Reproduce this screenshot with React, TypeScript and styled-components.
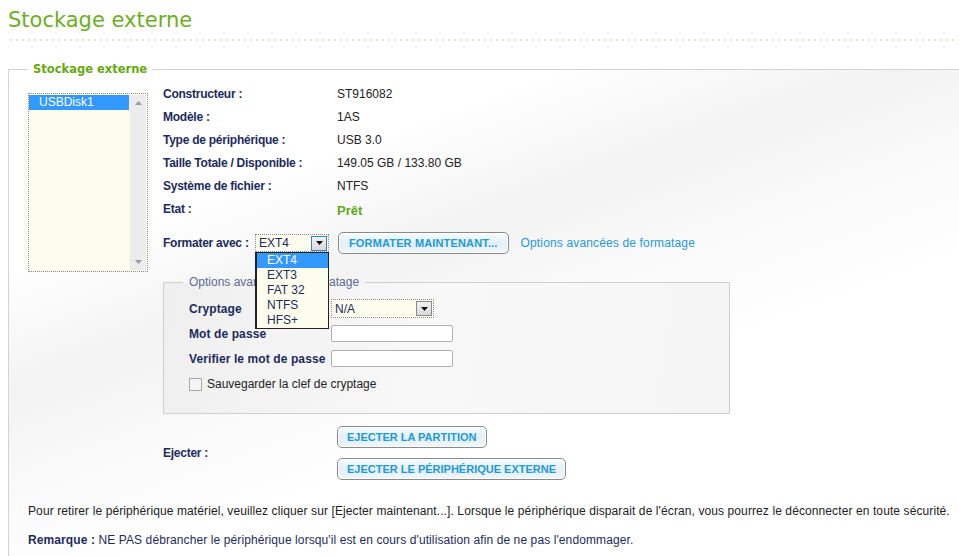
import React from "react";
import styled, { createGlobalStyle } from "styled-components";

const GlobalStyle = createGlobalStyle`
  html, body {
    margin: 0;
    padding: 0;
    background: #fff;
  }
  body {
    overflow: hidden;
    font-family: "Liberation Sans", Arial, sans-serif;
    font-size: 12px;
    color: #222;
  }
  #root {
    width: 959px;
    height: 556px;
    overflow: hidden;
  }
`;

const Page = styled.div`
  padding-left: 8px;
`;

const Title = styled.h1`
  margin: 0;
  padding-top: 6px;
  font-family: "DejaVu Sans", Verdana, sans-serif;
  font-size: 21px;
  font-weight: normal;
  line-height: 28px;
  color: #6caf1f;
`;

const Dots = styled.div`
  margin: 5px 0 0 2px;
  height: 2px;
  background: repeating-linear-gradient(to right, #dfe3cb 0 2px, transparent 2px 6px);
`;

const Panel = styled.fieldset`
  margin: 21px -40px 0 0;
  padding: 6px 0 60px 19px;
  min-width: 0;
  border: 1px solid #d3d3d3;
  background: linear-gradient(160deg, #fff 0%, #fff 22%, #f3f3f3 36%, #fafafa 48%, #fff 60%);
`;

const PanelLegend = styled.legend`
  padding: 0 5px;
  font-family: "DejaVu Sans", Verdana, sans-serif;
  font-weight: bold;
  font-size: 11.5px;
  line-height: 14px;
  color: #66a812;
`;

const Top = styled.div`
  display: flex;
  align-items: flex-start;
  gap: 15px;
`;

const ListBox = styled.div`
  margin-top: 11px;
  width: 120px;
  height: 179px;
  box-sizing: border-box;
  border: 1px dotted #8c8c8c;
  background: #fdfdee;
  display: flex;
  padding: 1px 1px 1px 0;
`;

const ListItems = styled.div`
  flex: 1;
`;

const ListItem = styled.div<{ $selected?: boolean }>`
  height: 15px;
  line-height: 15px;
  padding-left: 10px;
  font-size: 12px;
  color: ${(p) => (p.$selected ? "#fff" : "#1d2b5c")};
  background: ${(p) => (p.$selected ? "#3399ff" : "transparent")};
`;

const ScrollBar = styled.div`
  width: 16px;
  background: #ececec;
  border-left: 1px solid #f6f6f6;
  display: flex;
  flex-direction: column;
  justify-content: space-between;
  align-items: center;
  padding: 6px 0;
`;

const Details = styled.div`
  display: flex;
  flex-direction: column;
`;

const InfoGrid = styled.div`
  display: grid;
  grid-template-columns: 174px auto;
  grid-auto-rows: 23px;
  align-items: center;
`;

const Label = styled.span`
  font-weight: bold;
  color: #1c2b5c;
  letter-spacing: -0.25px;
`;

const Value = styled.span<{ $status?: boolean }>`
  color: ${(p) => (p.$status ? "#5fa818" : "#222")};
  font-weight: ${(p) => (p.$status ? "bold" : "normal")};
  font-size: ${(p) => (p.$status ? "13px" : "12px")};
  padding-top: ${(p) => (p.$status ? "3px" : "0")};
`;

const FormatRow = styled.div`
  margin-top: 12px;
  height: 22px;
  display: flex;
  align-items: center;
`;

const FormatLabel = styled(Label)`
  width: 92px;
`;

const SelectWrap = styled.div<{ $width: number; $height: number }>`
  position: relative;
  width: ${(p) => p.$width}px;
  height: ${(p) => p.$height}px;
  box-sizing: border-box;
  border: 1px dotted #8c8c8c;
  background: #fdfdee;
  display: flex;
  align-items: center;
  justify-content: space-between;
  padding: 0 1px 0 3px;
  color: #1d2b5c;
  font-size: 12px;
`;

const ArrowBtn = styled.div<{ $focus?: boolean }>`
  width: 16px;
  height: 15px;
  box-sizing: border-box;
  border: 1px solid ${(p) => (p.$focus ? "#3b80cf" : "#8a8a8a")};
  background: linear-gradient(#f2f2f2, #d9d9d9);
  display: flex;
  align-items: center;
  justify-content: center;
`;

const Popup = styled.div`
  position: absolute;
  top: 17px;
  left: -1px;
  width: 74px;
  height: 77px;
  box-sizing: border-box;
  border: 1px solid #222;
  border-left-width: 2px;
  background: #fdfdee;
  z-index: 5;
`;

const PopupItem = styled.div<{ $selected?: boolean }>`
  height: 15px;
  line-height: 15px;
  padding-left: 10px;
  color: ${(p) => (p.$selected ? "#fff" : "#1d2b5c")};
  background: ${(p) => (p.$selected ? "#3399ff" : "transparent")};
`;

const Button = styled.button`
  height: 22px;
  box-sizing: border-box;
  padding: 0 9px;
  border: 1px solid #8a8a8a;
  border-radius: 5px;
  background: linear-gradient(#f6fbfd 0%, #e3f0f7 50%, #eef6fa 100%);
  box-shadow: inset 0 0 0 1px #fff;
  font-family: "Liberation Sans", Arial, sans-serif;
  font-size: 11px;
  font-weight: bold;
  color: #1f9ad6;
  cursor: pointer;
`;

const FormatButton = styled(Button)`
  margin-left: 9px;
  padding: 0 10px;
  letter-spacing: 0.15px;
`;

const Link = styled.a`
  margin-left: 12px;
  color: #1f9ad8;
  text-decoration: none;
  font-size: 12px;
  letter-spacing: 0.15px;
`;

const Options = styled.fieldset`
  margin: 21px 0 0 0;
  width: 567px;
  box-sizing: border-box;
  padding: 7px 0 16px 19px;
  border: 1px solid #cfcfcf;
  background: linear-gradient(100deg, #efefef 0%, #f8f8f8 45%, #f5f5f5 100%);
`;

const OptionsLegend = styled.legend`
  padding: 0 6px;
  font-size: 12px;
  line-height: 14px;
  color: #5b6a96;
`;

const OptionRow = styled.div`
  height: 25px;
  padding-left: 6px;
  display: grid;
  grid-template-columns: 142px auto;
  align-items: center;
`;

const OptionLabel = styled.span`
  font-weight: bold;
  color: #1c2b5c;
  letter-spacing: 0.1px;
`;

const TextInput = styled.input`
  width: 122px;
  height: 17px;
  box-sizing: border-box;
  border: 1px solid #b0b0b0;
  border-radius: 2px;
  background: #fff;
  padding: 0 2px;
`;

const CheckRow = styled.label`
  height: 26px;
  padding-left: 6px;
  display: flex;
  align-items: center;
  gap: 5px;
  color: #222;
`;

const CheckBox = styled.span`
  width: 13px;
  height: 13px;
  box-sizing: border-box;
  border: 1px solid #a8a8a8;
  background: #f5f5f5;
`;

const EjectRow = styled.div`
  margin-top: 12px;
  display: grid;
  grid-template-columns: 174px auto;
  align-items: center;
`;

const EjectButtons = styled.div`
  display: flex;
  flex-direction: column;
  align-items: flex-start;
  gap: 10px;
`;

const Notes = styled.div`
  margin-top: 23px;
  display: flex;
  flex-direction: column;
  gap: 13px;
`;

const Note = styled.p<{ $remark?: boolean }>`
  margin: 0;
  line-height: 16px;
  letter-spacing: 0.1px;
  color: ${(p) => (p.$remark ? "#1d2b5c" : "#222")};
`;

const Strong = styled.b`
  color: #1c2b5c;
`;

const Tri = ({ up, color = "#111" }: { up?: boolean; color?: string }) => (
  <svg width="7" height="4" viewBox="0 0 7 4">
    <path d={up ? "M0 4 L3.5 0 L7 4 Z" : "M0 0 L7 0 L3.5 4 Z"} fill={color} />
  </svg>
);

const info: [string, string][] = [
  ["Constructeur :", "ST916082"],
  ["Modèle :", "1AS"],
  ["Type de périphérique :", "USB 3.0"],
  ["Taille Totale / Disponible :", "149.05 GB / 133.80 GB"],
  ["Système de fichier :", "NTFS"],
];

const formats = ["EXT4", "EXT3", "FAT 32", "NTFS", "HFS+"];

export default function App() {
  return (
    <>
      <GlobalStyle />
      <Page>
        <Title>Stockage externe</Title>
        <Dots />
        <Panel>
          <PanelLegend>Stockage externe</PanelLegend>
          <Top>
            <ListBox>
              <ListItems>
                <ListItem $selected>USBDisk1</ListItem>
              </ListItems>
              <ScrollBar>
                <Tri up color="#9a9a9a" />
                <Tri color="#9a9a9a" />
              </ScrollBar>
            </ListBox>
            <Details>
              <InfoGrid>
                {info.map(([k, v]) => (
                  <React.Fragment key={k}>
                    <Label>{k}</Label>
                    <Value>{v}</Value>
                  </React.Fragment>
                ))}
                <Label>Etat :</Label>
                <Value $status>Prêt</Value>
              </InfoGrid>
              <FormatRow>
                <FormatLabel>Formater avec :</FormatLabel>
                <SelectWrap $width={74} $height={18}>
                  <span>EXT4</span>
                  <ArrowBtn $focus>
                    <Tri />
                  </ArrowBtn>
                  <Popup>
                    {formats.map((f, i) => (
                      <PopupItem key={f} $selected={i === 0}>
                        {f}
                      </PopupItem>
                    ))}
                  </Popup>
                </SelectWrap>
                <FormatButton>FORMATER MAINTENANT...</FormatButton>
                <Link href="#">Options avancées de formatage</Link>
              </FormatRow>
              <Options>
                <OptionsLegend>Options avancées de formatage</OptionsLegend>
                <OptionRow>
                  <OptionLabel>Cryptage</OptionLabel>
                  <SelectWrap $width={103} $height={19}>
                    <span>N/A</span>
                    <ArrowBtn>
                      <Tri />
                    </ArrowBtn>
                  </SelectWrap>
                </OptionRow>
                <OptionRow>
                  <OptionLabel>Mot de passe</OptionLabel>
                  <TextInput type="password" />
                </OptionRow>
                <OptionRow>
                  <OptionLabel>Verifier le mot de passe</OptionLabel>
                  <TextInput type="password" />
                </OptionRow>
                <CheckRow>
                  <CheckBox />
                  Sauvegarder la clef de cryptage
                </CheckRow>
              </Options>
              <EjectRow>
                <Label>Ejecter :</Label>
                <EjectButtons>
                  <Button>EJECTER LA PARTITION</Button>
                  <Button>EJECTER LE PÉRIPHÉRIQUE EXTERNE</Button>
                </EjectButtons>
              </EjectRow>
            </Details>
          </Top>
          <Notes>
            <Note>
              Pour retirer le périphérique matériel, veuillez cliquer sur [Ejecter maintenant...]. Lorsque le
              périphérique disparait de l'écran, vous pourrez le déconnecter en toute sécurité.
            </Note>
            <Note $remark>
              <Strong>Remarque :</Strong> NE PAS débrancher le périphérique lorsqu'il est en cours d'utilisation
              afin de ne pas l'endommager.
            </Note>
          </Notes>
        </Panel>
      </Page>
    </>
  );
}
